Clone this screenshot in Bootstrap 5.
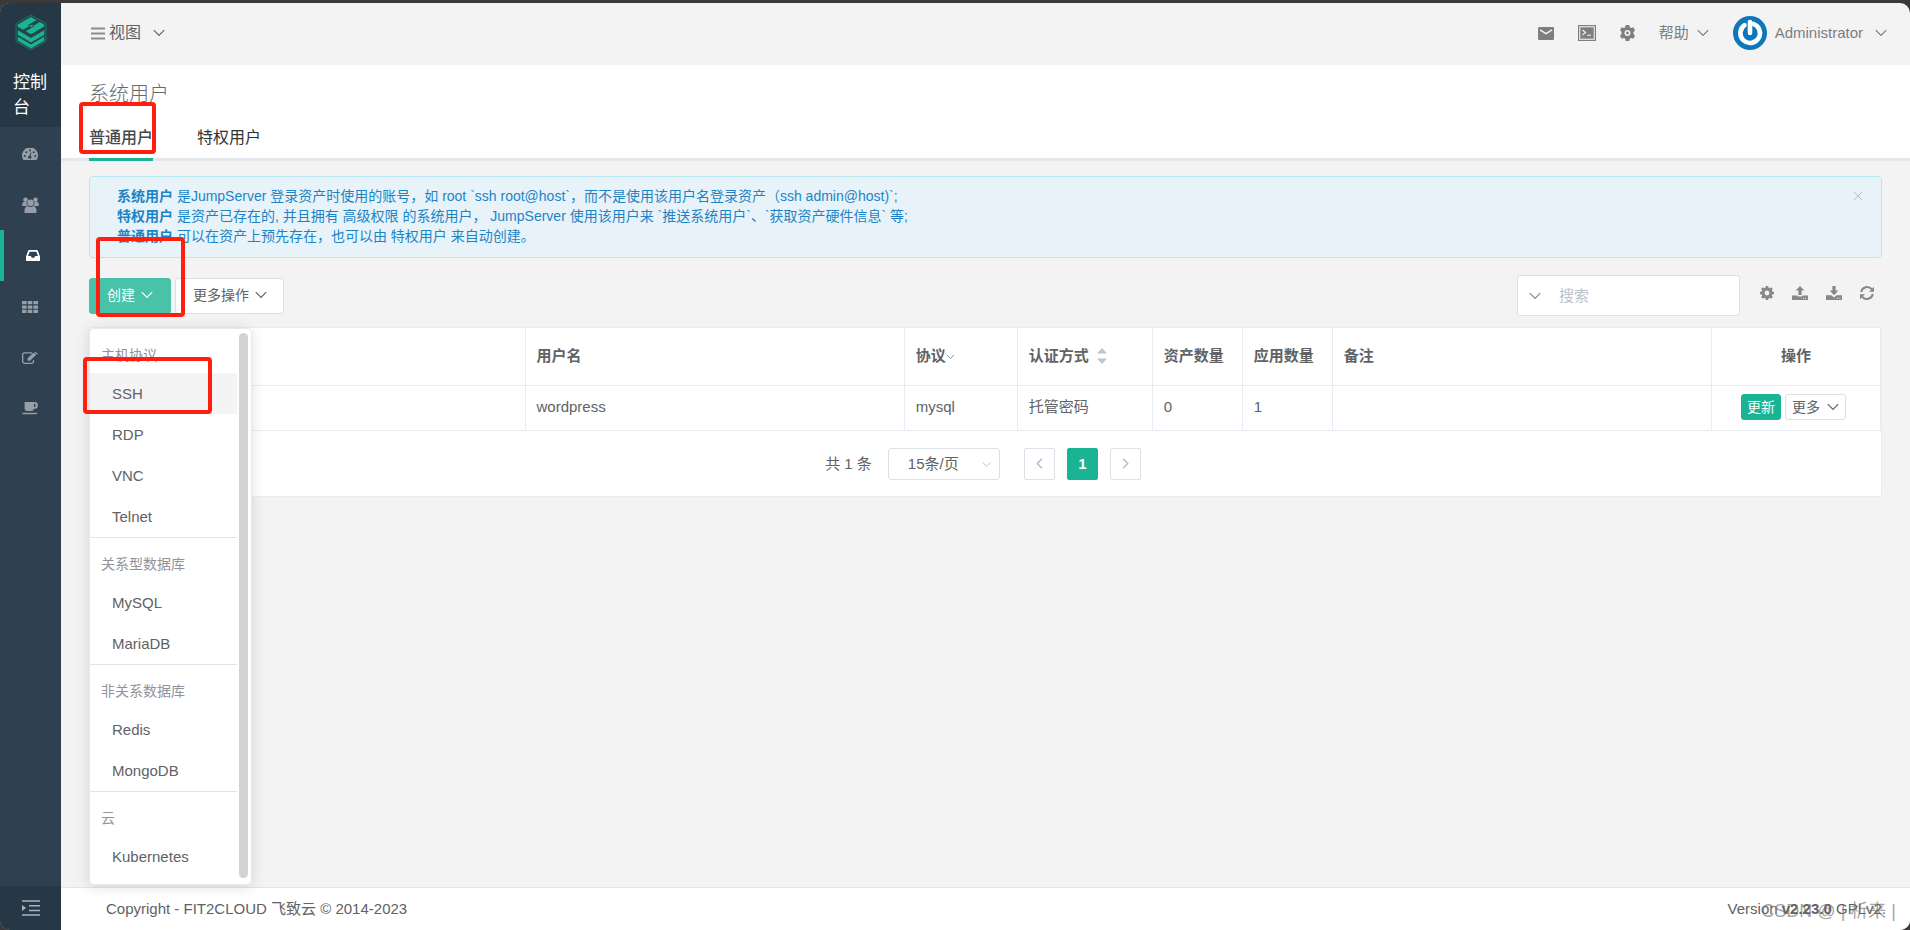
<!DOCTYPE html>
<html lang="zh-CN">
<head>
<meta charset="utf-8">
<meta name="viewport" content="width=device-width, initial-scale=1">
<title>系统用户</title>
<link href="https://cdn.jsdelivr.net/npm/bootstrap@5.3.0/dist/css/bootstrap.min.css" rel="stylesheet">
<style>
  :root { --brand: #1ab394; --line: #e4e7ed; --ink: #606266; --mark: #ff1f10; }
  body { font-family: "Liberation Sans", "Noto Sans CJK SC", sans-serif; font-size: 15px; line-height: 20px; color: var(--ink); background: #3a3838; }
  a { color: inherit; text-decoration: none; }
  svg { display: block; flex: none; }
  .shell { margin-top: 3px; min-height: calc(100vh - 3px); border-radius: 10px; overflow: hidden; background: #f3f3f3; }

  .side { width: 61px; background: #2f4050; color: #989ea8; }
  .side-brand { height: 124px; padding-top: 11px; background: #263746; color: #fff; font-size: 17px; line-height: 25px; }
  .side-brand span { padding: 19px 12px 0 13px; display: block; }
  .side nav { padding-top: 1px; }
  .side-item { height: 51px; border-left: 4px solid transparent; padding-right: 5px; }
  .side-item.current { border-color: var(--brand); color: #fff; padding: 0; }
  .side-toggle { height: 44px; background: #263746; color: #a9b3bd; border: 0; }

  .topbar { height: 62px; padding: 0 23px 2px 30px; }
  .view-link { font-size: 16px; gap: 4px; }
  .top-icons { color: #7c7e80; }
  .page-head { background: #fff; border-bottom: 3px solid var(--line); padding: 17px 28px 0; }
  .page-head h1 { font-size: 20px; line-height: 24px; font-weight: 300; margin: 0; color: #676a6c; }
  .tab-row { gap: 44px; margin: 9px 0 -3px; font-size: 16px; color: #303133; }
  .tab-row a { display: block; position: relative; padding: 13px 0 10px; line-height: 20px; border-bottom: 3px solid transparent; }
  .tab-row a.current { border-color: var(--brand); font-weight: 500; color: #45494f; }

  .content { padding: 15px 28px 0; }
  .note { background: #e7f3f9; border: 1px solid #b9e6f0; border-radius: 4px; padding: 9px 18px 11px 27px; font-size: 14px; line-height: 20px; color: #1c84c6; }
  .note .x-btn { border: 0; background: none; padding: 5px 0; color: #b6bcc8; height: 20px; }
  .tools { margin-top: 17px; }
  .btn-box { height: 36px; border: 1px solid #dcdfe6; border-radius: 3px; background: #fff; color: var(--ink); font-size: 14px; line-height: 20px; padding: 0 17px 2px; display: flex; align-items: center; gap: 6px; white-space: nowrap; }
  .btn-box.go { background: #48c2a9; border-color: #48c2a9; color: #fff; width: 82px; }
  .btn-box.wide { width: 109px; }
  .btn-box.mini { height: 26px; padding: 0 6px; gap: 7px; }
  .btn-box.fill { background: var(--brand); border-color: var(--brand); color: #fff; padding: 0 5px; }
  .find { width: 223px; height: 41px; background: #fff; border: 1px solid #dcdfe6; border-radius: 3px; padding: 0 11px; gap: 18px; }
  .find input { border: 0; outline: 0; width: 100%; min-width: 0; padding: 0; color: var(--ink); }
  .find input::placeholder { color: #bcc1ca; }
  .tool-icons { color: #878787; gap: 18px; padding: 0 8px 6px 20px; }

  .grid-card { background: #fff; border: 1px solid #e8ecf3; border-radius: 2px; margin-top: 11px; }
  .grid { width: 100%; table-layout: fixed; }
  .grid th, .grid td { border: 1px solid #e8ebf2; border-width: 0 1px 1px 0; padding: 0 11px; text-align: left; white-space: nowrap; }
  .grid th { height: 57px; font-weight: 700; }
  .grid td { height: 45px; padding-bottom: 1px; }
  .grid th:last-child { text-align: center; }
  .grid td:last-child { padding-right: 16px; }
  .c-name { width: 435px; } .c-proto { width: 113px; } .c-auth { width: 135px; } .c-num { width: 90px; } .c-act { width: 169px; }
  .pager { padding: 17px 5px 16px 0; }
  .pager select { width: 112px; height: 32px; border: 1px solid #dcdfe6; border-radius: 3px; appearance: none; background: transparent; color: var(--ink); padding: 0 0 0 19px; }
  .pick svg { position: absolute; right: 9px; top: 13px; color: #b4bac4; pointer-events: none; }
  .page-set { gap: 12px; }
  .page-btn { width: 31px; height: 32px; border: 1px solid #dcdfe6; border-radius: 2px; background: #fff; color: #b4bac4; padding: 0; display: flex; align-items: center; justify-content: center; }
  .page-btn.current { background: var(--brand); border-color: var(--brand); color: #fff; font-weight: 700; }

  .pop { position: absolute; left: 0; top: 50px; z-index: 5; width: 163px; background: #fff; border: 1px solid #e6e9f0; border-radius: 5px; box-shadow: 0 2px 14px rgba(0,0,0,.13); padding: 0 14px 7px 0; }
  .pop ul { list-style: none; margin: 0; padding: 44px 0 0; position: relative; border-top: 1px solid #dfe4ec; }
  .pop ul:first-of-type { border: 0; }
  .pop .group-name { position: absolute; top: 16px; left: 11px; font-size: 14px; color: #909399; }
  .pop a { display: block; height: 41px; line-height: 41px; padding-left: 22px; }
  .pop a.hover { background: #f4f4f5; }
  .pop .thumb { position: absolute; right: 3px; top: 4px; bottom: 6px; width: 9px; border-radius: 5px; background: #d3d3d3; }

  .foot { background: #fff; border-top: 1px solid #e2e5e8; height: 43px; padding: 0 24px 0 45px; position: relative; }
  .stamp { position: absolute; right: 14px; bottom: 7px; font-size: 18px; line-height: 24px; color: rgba(110,110,110,.65); }

  .frame { position: absolute; z-index: 6; border: 4px solid var(--mark); border-radius: 4px; pointer-events: none; }
  .frame-tab { inset: -13px -3px 4px -10px; }
  .frame-new { left: 7px; top: -41px; width: 89px; height: 80px; }
  .frame-ssh { left: -7px; top: 28px; width: 129px; height: 57px; }
</style>
</head>
<body>
<svg width="0" height="0" class="position-absolute" aria-hidden="true">
  <symbol id="down" viewBox="0 0 12 8"><path d="M.8 1.200 6 6.400l5.200-5.200" fill="none" stroke="currentColor" stroke-width="1.200"/></symbol>
</svg>
<div class="shell d-flex">
  <aside class="side d-flex flex-column flex-shrink-0">
    <div class="side-brand">
      <svg class="mx-auto" width="32" height="37" viewBox="0 0 32 37"><path d="M16 1 31 9.500v18L16 36 1 27.500v-18z" fill="#244549" stroke="#1b7d70" stroke-width=".8"/><path fill="#1ab394" d="M2.800 10.600 16 3l5.500 3.200-8.800 5.100 3.300 1.900 8.700-5.100 4.500 2.600v1.900L16 20.300l-5.200-3 8.600-5-2.700-1.600-8.800 5.100-5.100-3zM2.800 16.300 16 23.900l13.200-7.600v4.500L16 28.400 2.800 20.800zM2.800 22.800 16 30.400l13.200-7.600v4L16 34.400 2.800 26.800z"/></svg>
      <span>控制台</span>
    </div>
    <nav class="flex-grow-1">
      <a href="#" aria-label="仪表盘" class="side-item d-flex align-items-center justify-content-center"><svg width="16" height="12" viewBox="0 0 16 12"><path d="M1.500 12a8 8 0 1 1 13 0z" fill="currentColor"/><g fill="#2f4050"><circle cx="2.800" cy="8" r="1"/><circle cx="4.300" cy="4.200" r="1"/><circle cx="8" cy="2.600" r="1"/><circle cx="11.700" cy="4.200" r="1"/><circle cx="13.200" cy="8" r="1"/><circle cx="7.800" cy="9.200" r="1.600"/></g><path d="m7.800 9 1.200-4.500" stroke="#2f4050" stroke-width="1"/></svg></a>
      <a href="#" aria-label="用户管理" class="side-item d-flex align-items-center justify-content-center"><svg width="17" height="16" viewBox="0 0 17 16" fill="currentColor"><circle cx="3.500" cy="2.700" r="2.300"/><circle cx="13.500" cy="2.700" r="2.300"/><path d="M.3 9V6.800Q.3 5 2 5h2.500Q4.300 8 6 9zM16.700 9V6.800Q16.700 5 15 5h-2.500q.2 3-1.500 4z"/><circle cx="8.500" cy="5.800" r="3.200"/><path d="M2.500 16Q2 9.500 5.500 9q3 1.700 6 0 3.500.5 3 7z"/></svg></a>
      <a href="#" aria-label="资产管理" class="side-item current d-flex align-items-center justify-content-center"><svg width="14" height="11" viewBox="0 0 14 11"><path fill="currentColor" fill-rule="evenodd" d="M2.500 0h9L14 6.500V11H0V6.500zM3.700 1.700 2 6h2.800l1 1.800h2.400l1-1.800H12l-1.700-4.300z"/></svg></a>
      <a href="#" aria-label="应用管理" class="side-item d-flex align-items-center justify-content-center"><svg width="16" height="12" viewBox="0 0 16 12"><path fill="currentColor" d="M0 0h4.600v3.300H0zM5.700 0h4.600v3.300H5.700zM11.400 0H16v3.300h-4.600zM0 4.400h4.600v3.300H0zM5.700 4.400h4.600v3.300H5.700zM11.400 4.400H16v3.300h-4.600zM0 8.700h4.600V12H0zM5.700 8.700h4.600V12H5.700zM11.400 8.700H16V12h-4.600z"/></svg></a>
      <a href="#" aria-label="授权管理" class="side-item d-flex align-items-center justify-content-center"><svg width="16" height="12" viewBox="0 0 16 12"><path d="M10 .8H2.500Q.7.800.7 2.500v7q0 1.800 1.800 1.800h7.300q1.700 0 1.700-1.800V8" fill="none" stroke="currentColor" stroke-width="1.300"/><path d="m5.600 6.300 6-5.900 2.500 2.400-6 5.900H5.600zM12.300 0l1-.3L15.800 1.800l-1 1z" fill="currentColor"/></svg></a>
      <a href="#" aria-label="工作台" class="side-item d-flex align-items-center justify-content-center"><svg width="16" height="13" viewBox="0 0 16 13"><path fill="currentColor" fill-rule="evenodd" d="M2.600 0h9.900a3.400 3.400 0 0 1 0 6.800h-.6Q11.500 9 9.500 9H5Q2.600 9 2.600 6.800zM12 1.800V5a1.600 1.600 0 1 0 0-3.200zM0 10.700h15.500q-.3 1.600-2 1.600H2q-1.700 0-2-1.600z"/></svg></a>
    </nav>
    <button type="button" aria-label="展开菜单" class="side-toggle d-flex align-items-center justify-content-center"><svg width="18" height="16" viewBox="0 0 18 16"><path d="M0 1h18M7 5.700h11M7 10.400h11M0 15h18" stroke="currentColor" stroke-width="1.500"/><path d="m0 5 4 3-4 3z" fill="currentColor"/></svg></button>
  </aside>

  <div class="d-flex flex-column flex-grow-1">
    <header class="topbar d-flex align-items-center justify-content-between">
      <a href="#" class="view-link d-flex align-items-center"><svg width="14" height="13" viewBox="0 0 14 13"><path d="M0 1.500h14M0 6.500h14M0 11.500h14" stroke="#888c92" stroke-width="2"/></svg>视图<svg width="12" height="8" class="ms-2"><use href="#down"/></svg></a>
      <div class="top-icons d-flex align-items-center">
        <a href="#" aria-label="消息"><svg width="16" height="13" viewBox="0 0 16 13"><rect width="16" height="13" rx="1.300" fill="currentColor"/><path d="m2 2.800 6 3.800 6-3.800" fill="none" stroke="#f3f3f3" stroke-width="1.400"/></svg></a>
        <a href="#" aria-label="终端" class="ms-4"><svg width="18" height="16" viewBox="0 0 18 16"><rect x=".6" y=".6" width="16.800" height="14.800" fill="none" stroke="currentColor" stroke-width="1.200"/><rect x="2.300" y="2.300" width="13.400" height="11.400" fill="currentColor"/><path d="m4.500 5 3 2.500-3 2.500M9 10.300h4" fill="none" stroke="#f3f3f3" stroke-width="1.100"/></svg></a>
        <a href="#" aria-label="设置" class="ms-4"><svg width="15" height="16" viewBox="0 0 15 16"><path fill="currentColor" fill-rule="evenodd" d="M5.700 0h3.600l.5 2.200 1.300.8 2.200-.7L15 5.200 13.500 7v2l1.500 1.800-1.700 2.900-2.200-.7-1.300.8-.5 2.200H5.700l-.5-2.200-1.300-.8-2.200.7L0 10.800 1.500 9V7L0 5.200l1.700-2.900 2.200.7 1.300-.8zM7.500 5a3 3 0 1 0 0 6 3 3 0 0 0 0-6zm0 1.600a1.400 1.400 0 1 1 0 2.800 1.400 1.400 0 0 1 0-2.800z"/></svg></a>
        <a href="#" class="ms-4 d-flex align-items-center gap-2">帮助<svg width="12" height="8"><use href="#down"/></svg></a>
        <a href="#" class="ms-4 d-flex align-items-center gap-2"><svg width="34" height="34" viewBox="0 0 34 34"><circle cx="17" cy="17" r="17" fill="#0d77b9"/><path d="M11.500 9.200a9.800 9.800 0 1 0 8.800-1.300M17 6v11" fill="none" stroke="#fff" stroke-width="4.600" stroke-linecap="round"/></svg>Administrator<svg width="12" height="8" class="ms-1"><use href="#down"/></svg></a>
      </div>
    </header>

    <section class="page-head">
      <h1>系统用户</h1>
      <nav class="tab-row d-flex">
        <a href="#" class="current">普通用户<span class="frame frame-tab"></span></a>
        <a href="#">特权用户</a>
      </nav>
    </section>

    <main class="content flex-grow-1">
      <div class="note d-flex justify-content-between" role="alert">
        <div><b>系统用户</b> 是JumpServer 登录资产时使用的账号，如 root `ssh root@host`，而不是使用该用户名登录资产（ssh admin@host)`;<br><b>特权用户</b> 是资产已存在的, 并且拥有 高级权限 的系统用户， JumpServer 使用该用户来 `推送系统用户`、`获取资产硬件信息` 等;<br><b>普通用户</b> 可以在资产上预先存在，也可以由 特权用户 来自动创建。</div>
        <button type="button" class="x-btn" aria-label="关闭"><svg width="10" height="10" viewBox="0 0 10 10"><path d="m1 1 8 8m0-8-8 8" stroke="currentColor"/></svg></button>
      </div>

      <div class="tools d-flex align-items-center justify-content-between">
        <div class="d-flex gap-1 position-relative">
          <button type="button" class="btn-box go">创建<svg width="12" height="8"><use href="#down"/></svg></button>
          <button type="button" class="btn-box wide">更多操作<svg width="12" height="8"><use href="#down"/></svg></button>
          <div class="pop">
            <ul><li class="group-name">主机协议</li><li><a href="#" class="hover">SSH</a></li><li><a href="#">RDP</a></li><li><a href="#">VNC</a></li><li><a href="#">Telnet</a></li></ul>
            <ul><li class="group-name">关系型数据库</li><li><a href="#">MySQL</a></li><li><a href="#">MariaDB</a></li></ul>
            <ul><li class="group-name">非关系数据库</li><li><a href="#">Redis</a></li><li><a href="#">MongoDB</a></li></ul>
            <ul><li class="group-name">云</li><li><a href="#">Kubernetes</a></li></ul>
            <span class="thumb"></span>
            <span class="frame frame-ssh"></span>
          </div>
          <span class="frame frame-new"></span>
        </div>
        <div class="d-flex align-items-center">
          <div class="find d-flex align-items-center"><svg width="12" height="8" color="#888"><use href="#down"/></svg><input type="text" placeholder="搜索" aria-label="搜索"></div>
          <div class="tool-icons d-flex align-items-center">
            <a href="#" aria-label="列设置"><svg width="14" height="14" viewBox="0 0 14 14"><path fill="currentColor" fill-rule="evenodd" d="M5.800 0h2.400l.4 1.800.9.400L11.100 1.200l1.700 1.700-1 1.600.4.900 1.800.4v2.400l-1.800.4-.4.900 1 1.600-1.700 1.700-1.600-1-.9.400-.4 1.800H5.800l-.4-1.800-.9-.4-1.600 1-1.700-1.700 1-1.600-.4-.9L0 8.200V5.800l1.800-.4.400-.9-1-1.600 1.700-1.700 1.600 1 .9-.4zM7 4.600a2.400 2.400 0 1 0 0 4.800 2.400 2.400 0 0 0 0-4.800z"/></svg></a>
            <a href="#" aria-label="上传"><svg width="16" height="14" viewBox="0 0 16 14"><path fill="currentColor" fill-rule="evenodd" d="M8 0l4.300 4.600H9.600V9H6.400V4.600H3.700zM0 9.500h5.200q.5 1 1.500 1h2.600q1 0 1.500-1H16V14H0zm11 2.200v1h1v-1zm2.300 0v1h1v-1z"/></svg></a>
            <a href="#" aria-label="下载"><svg width="16" height="14" viewBox="0 0 16 14"><path fill="currentColor" fill-rule="evenodd" d="M6.400 0h3.200v4.500h2.700L8 9.200 3.700 4.500h2.700zM0 9.200h5.300L8 11.500l2.700-2.300H16V14H0zm11 2.500v1h1v-1zm2.300 0v1h1v-1z"/></svg></a>
            <a href="#" aria-label="刷新"><svg width="14" height="14" viewBox="0 0 14 14"><path d="M1.200 6A6 6 0 0 1 11.700 3.200M12.800 8A6 6 0 0 1 2.300 10.800" fill="none" stroke="currentColor" stroke-width="2"/><path d="M14 .7v5H9zM0 13.300v-5h5z" fill="currentColor"/></svg></a>
          </div>
        </div>
      </div>

      <div class="grid-card">
        <table class="grid">
          <colgroup><col class="c-name"><col><col class="c-proto"><col class="c-auth"><col class="c-num"><col class="c-num"><col><col class="c-act"></colgroup>
          <thead><tr><th></th><th>用户名</th>
            <th><span class="d-flex align-items-center">协议<svg width="9" height="7" viewBox="0 0 9 7"><path d="m1 2 3.500 3.500L8 2" fill="none" stroke="#8d9199"/></svg></span></th>
            <th><span class="d-flex align-items-center gap-2">认证方式<svg width="10" height="16" viewBox="0 0 10 16"><path d="m5 0 5 5.500H0zM0 10.500h10L5 16z" fill="#c0c4cc"/></svg></span></th>
            <th>资产数量</th><th>应用数量</th><th>备注</th><th>操作</th></tr></thead>
          <tbody><tr><td></td><td>wordpress</td><td>mysql</td><td>托管密码</td><td>0</td><td>1</td><td></td>
            <td><div class="d-flex gap-1 justify-content-center"><button type="button" class="btn-box mini fill">更新</button><button type="button" class="btn-box mini">更多<svg width="12" height="8"><use href="#down"/></svg></button></div></td></tr></tbody>
        </table>
        <div class="pager d-flex align-items-center justify-content-center">
          <span class="me-3">共 1 条</span>
          <div class="pick position-relative me-4"><select aria-label="每页条数"><option>15条/页</option></select><svg width="9" height="7"><use href="#down"/></svg></div>
          <div class="page-set d-flex">
            <button type="button" class="page-btn" aria-label="上一页"><svg width="7" height="11" viewBox="0 0 7 11"><path d="M6 .8 1.300 5.500 6 10.200" fill="none" stroke="currentColor" stroke-width="1.400"/></svg></button>
            <button type="button" class="page-btn current">1</button>
            <button type="button" class="page-btn" aria-label="下一页"><svg width="7" height="11" viewBox="0 0 7 11"><path d="m1 .8 4.700 4.700L1 10.200" fill="none" stroke="currentColor" stroke-width="1.400"/></svg></button>
          </div>
        </div>
      </div>
    </main>

    <footer class="foot d-flex align-items-center justify-content-between">
      <span>Copyright - FIT2CLOUD 飞致云 © 2014-2023</span>
      <span>Version <b>v2.23.0</b> GPLv2.</span>
      <span class="stamp">CSDN @ | 析来 |</span>
    </footer>
  </div>
</div>
<script src="https://cdn.jsdelivr.net/npm/bootstrap@5.3.0/dist/js/bootstrap.bundle.min.js"></script>
</body>
</html>
